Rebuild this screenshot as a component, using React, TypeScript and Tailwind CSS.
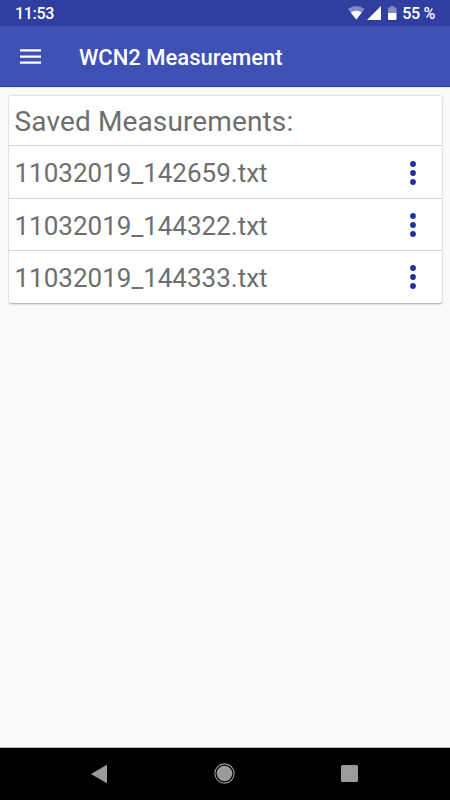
const files = ["11032019_142659.txt", "11032019_144322.txt", "11032019_144333.txt"];

function StatusBar() {
  return (
    <div className="flex h-[26px] shrink-0 items-center justify-between bg-[#303f9f] pr-[15px] pl-[15px] text-[16px] leading-[26px] font-medium tracking-[-0.300px] text-white">
      <span className="pt-[2px]">11:53</span>
      <div className="flex items-center">
        <svg width="50" height="26" viewBox="0 0 50 26" fill="#fff">
          <path d="M0 9 Q8.250 3 16.500 9 L8.250 19.500 Z" opacity="0.4" />
          <path d="M2.800 12.500 Q8.250 9 13.700 12.500 L8.250 19.500 Z" />
          <path d="M33 6v14H19Z" />
          <path d="M42.500 6h3.500v1.500h2.500V13h-8.500V7.500h2.500Z" opacity="0.4" />
          <path d="M40 13h8.500v6a1 1 0 0 1-1 1H41a1 1 0 0 1-1-1Z" />
        </svg>
        <span className="pt-[2px] pl-1">55 %</span>
      </div>
    </div>
  );
}

function AppBar() {
  return (
    <div className="flex h-[61px] shrink-0 items-center border-b border-[#2840b0] bg-[#3f51b5] pl-5 text-white">
      <svg width="21" height="18" viewBox="0 0 21 18" fill="#fff">
        <path d="M0 2.300h21v2.300H0zM0 8.500h21v2.300H0zM0 14.500h21v2.300H0z" />
      </svg>
      <h1 className="pt-1 pl-[38px] text-[22px] leading-[30px] font-medium">WCN2 Measurement</h1>
    </div>
  );
}

function FileRow({ name }: { name: string }) {
  return (
    <li className="flex h-[52px] items-center justify-between border-t border-[#d4d4d4] pr-[26px] pl-[6px] first:h-[53px] last:h-[53px] last:pb-px">
      <span className="pt-[2px]">{name}</span>
      <button type="button" aria-label="More options" className="pt-px">
        <svg width="6" height="26" viewBox="0 0 6 26" fill="#2030a0">
          <circle cx="3" cy="4" r="2.900" />
          <circle cx="3" cy="13" r="2.900" />
          <circle cx="3" cy="22" r="2.900" />
        </svg>
      </button>
    </li>
  );
}

function NavBar() {
  return (
    <div className="flex h-[52px] shrink-0 items-center justify-between bg-black pr-[92px] pb-px pl-[91px]">
      <svg width="16" height="20" viewBox="0 0 16 20" fill="#9b9b9b">
        <path d="M0 10 15 1.200q1-.4 1 .6v16.400q0 1-1 .6Z" />
      </svg>
      <svg width="21" height="21" viewBox="0 0 21 21" className="ml-px">
        <circle cx="10.500" cy="10.500" r="9.600" fill="none" stroke="#9b9b9b" strokeWidth="1.100" />
        <circle cx="10.500" cy="10.500" r="7.800" fill="#9b9b9b" />
      </svg>
      <div className="size-[17px] rounded-[1.500px] bg-[#9b9b9b]" />
    </div>
  );
}

export default function App() {
  return (
    <div className="flex h-[800px] w-[450px] flex-col overflow-hidden bg-[#fafafa] font-['Roboto',sans-serif]">
      <StatusBar />
      <AppBar />
      <main className="grow border-t border-b border-t-[#e6e8f5] border-b-[#b5b5b5] px-[8.500px] pt-2">
        <section className="rounded-[2px] bg-white text-[26px] leading-[34px] text-[#6e6e6e] shadow-[0_0.500px_2px_rgba(0,0,0,0.35)]">
          <h2 className="flex h-[49px] items-center pt-[3px] pl-[6px] text-[28px] tracking-[0.130px]">
            Saved Measurements:
          </h2>
          <ul>
            {files.map((name) => (
              <FileRow key={name} name={name} />
            ))}
          </ul>
        </section>
      </main>
      <NavBar />
    </div>
  );
}
